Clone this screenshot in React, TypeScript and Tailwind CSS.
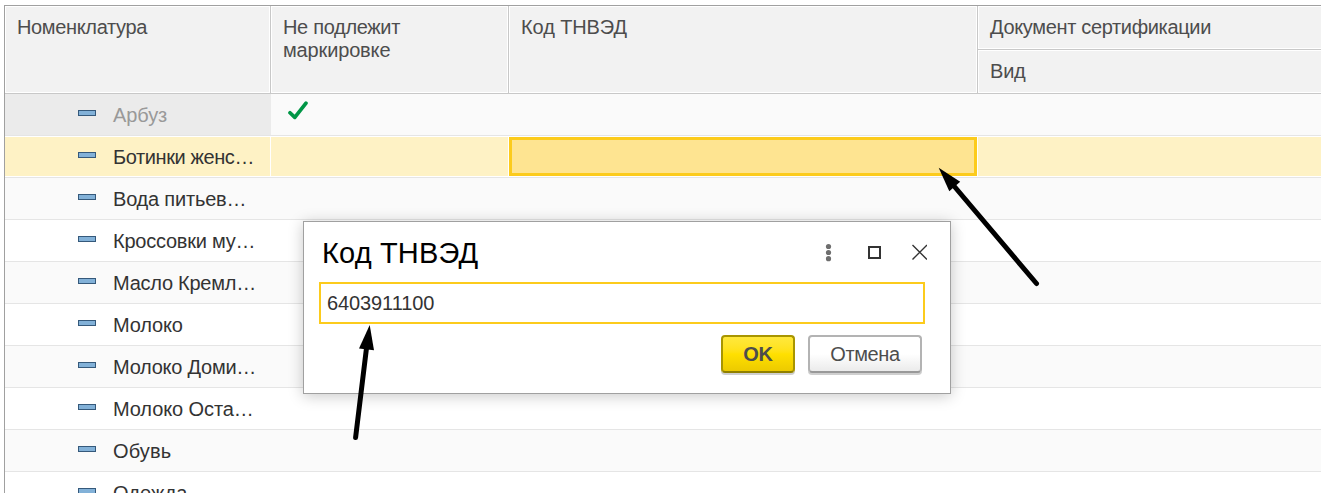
import React from 'react';

type Row = { name: string; tracking?: string; muted?: boolean; marked?: boolean; active?: boolean };

const rows: Row[] = [
  { name: 'Арбуз', muted: true, marked: true, tracking: 'tracking-[-0.1px]' },
  { name: 'Ботинки женс…', active: true, tracking: 'tracking-[-0.4px]' },
  { name: 'Вода питьев…', tracking: 'tracking-[-0.2px]' },
  { name: 'Кроссовки му…', tracking: 'tracking-[-0.23px]' },
  { name: 'Масло Кремл…', tracking: 'tracking-[-0.25px]' },
  { name: 'Молоко', tracking: 'tracking-[-0.15px]' },
  { name: 'Молоко Доми…', tracking: 'tracking-[-0.25px]' },
  { name: 'Молоко Оста…', tracking: 'tracking-[-0.1px]' },
  { name: 'Обувь', tracking: 'tracking-[0.15px]' },
  { name: 'Одежда', tracking: 'tracking-[0.1px]' },
];

const columns = 'grid grid-cols-[266px_238px_469px_343px]';
const headCell = 'border-y border-l border-white bg-[#f2f2f2] pl-[11px] pt-[9px]';

function CheckMark() {
  return (
    <svg className="ml-[17px] mt-[7px] block" width="21" height="20" viewBox="0 0 21 20">
      <path
        d="M2 11.7 L6.8 16.4 L18 2.2"
        fill="none"
        stroke="#009646"
        strokeWidth="3.7"
        strokeLinecap="round"
        strokeLinejoin="round"
      />
    </svg>
  );
}

function TableHeader() {
  return (
    <div className={`${columns} h-[88px] border-b border-[#c8c8c8] leading-[23px] text-[#4d4d4d]`}>
      <div className="flex border-r border-[#c8c8c8]">
        <div className={`${headCell} flex-1 border-r tracking-[-0.35px]`}>Номенклатура</div>
      </div>
      <div className="flex border-r border-[#c8c8c8]">
        <div className={`${headCell} flex-1 border-r`}>
          <span className="tracking-[-0.32px]">Не подлежит</span>
          <br />
          <span className="tracking-[-0.15px]">маркировке</span>
        </div>
      </div>
      <div className="flex border-r border-[#c8c8c8]">
        <div className={`${headCell} flex-1 border-r tracking-[-0.1px]`}>Код ТНВЭД</div>
      </div>
      <div className="grid grid-rows-[44px_43px]">
        <div className="flex border-b border-[#c8c8c8]">
          <div className={`${headCell} flex-1 tracking-[-0.34px]`}>Документ сертификации</div>
        </div>
        <div className={`${headCell} tracking-[-0.2px]`}>Вид</div>
      </div>
    </div>
  );
}

function TableRow({ row, odd }: { row: Row; odd: boolean }) {
  const nameTone = row.muted ? 'bg-[#ebebeb] text-[#999999]' : 'text-[#333333]';
  const cell = row.active ? 'border-y border-white bg-[#fef2c5]' : '';
  const divider = row.active ? 'border-r' : '';
  return (
    <div className={`${columns} h-[42px] border-b border-[#e5e5e5] ${odd ? 'bg-[#fafafa]' : 'bg-white'}`}>
      <div className={`flex items-start pl-[73px] ${nameTone} ${cell} ${divider}`}>
        <span className={`h-[6px] w-[18px] shrink-0 border border-[#35597b] bg-[#82b1d8] ${row.active ? 'mt-[15px]' : 'mt-4'}`} />
        <span className={`ml-[17px] whitespace-nowrap leading-6 ${row.tracking ?? ''} ${row.active ? 'mt-2' : 'mt-[9px]'}`}>
          {row.name}
        </span>
      </div>
      <div className={`${cell} ${divider}`}>{row.marked && <CheckMark />}</div>
      <div className={row.active ? 'flex border-y border-r border-white' : ''}>
        {row.active && <div className="flex-1 border-[3px] border-[#fccb1c] bg-[#fee491]" />}
      </div>
      <div className={cell} />
    </div>
  );
}

function Dialog() {
  return (
    <div className="absolute left-[303px] top-[221px] flex h-[173px] w-[648px] flex-col border border-[#a0a0a0] bg-white shadow-[0_2px_14px_rgba(0,0,0,0.22)]">
      <div className="flex h-[60px] items-center pl-[18px] pr-[23px]">
        <h1 className="flex-1 pt-0.5 text-[29px] leading-[34px] tracking-[0.15px] text-black">Код ТНВЭД</h1>
        <svg className="block" width="108" height="20" viewBox="0 0 108 20">
          <g fill="#6e6e6e">
            <circle cx="9.5" cy="4.5" r="2.6" />
            <circle cx="9.5" cy="10.5" r="2.6" />
            <circle cx="9.5" cy="16.7" r="2.6" />
          </g>
          <rect x="50" y="5" width="11" height="11" fill="none" stroke="#333333" strokeWidth="2" />
          <path d="M93.5 3 L108 17.5 M108 3 L93.5 17.5" fill="none" stroke="#333333" strokeWidth="1.4" />
        </svg>
      </div>
      <div className="ml-[15px] flex h-[42px] w-[606px] items-center border-2 border-[#fccb1c] pl-1.5 tracking-[-0.1px] text-[#333333]">
        6403911100
      </div>
      <div className="mt-[11px] flex justify-end gap-[13px] pr-7 text-[#4d4d4d]">
        <button className="h-[38px] w-[74px] rounded-[4px] border-2 border-[#a89500] border-b-[#8f7f00] bg-linear-to-b from-[#ffe83c] via-[#ffe000] to-[#ecca00] font-bold tracking-[-0.3px] shadow-[0_2px_0_#cfcfcf]">
          OK
        </button>
        <button className="h-[38px] w-[114px] rounded-[4px] border-2 border-[#b3b3b3] border-b-[#999999] bg-linear-to-b from-white via-white to-[#ebebeb] tracking-[-0.4px] shadow-[0_2px_0_#cfcfcf]">
          Отмена
        </button>
      </div>
    </div>
  );
}

function Arrows() {
  return (
    <svg className="pointer-events-none absolute inset-0" width="1321" height="493" viewBox="0 0 1321 493">
      <g stroke="#000000" strokeWidth="5" strokeLinecap="round">
        <path d="M954 186 L1036.5 283.5" />
        <path d="M366.5 348 L355.6 437.5" />
      </g>
      <path d="M938.7 167.7 L960.2 181.8 L949.3 191.2 Z" />
      <path d="M369.7 325 L374 350.3 L359 348.5 Z" />
    </svg>
  );
}

export default function App() {
  return (
    <div className="relative h-[493px] w-[1321px] overflow-hidden bg-white pl-1 pt-[5px] font-['Liberation_Sans',Arial,sans-serif] text-[20px]">
      <div className="border-l border-t border-[#a0a0a0]">
        <TableHeader />
        {rows.map((row, i) => (
          <TableRow key={row.name} row={row} odd={i % 2 === 0} />
        ))}
      </div>
      <Dialog />
      <Arrows />
    </div>
  );
}
